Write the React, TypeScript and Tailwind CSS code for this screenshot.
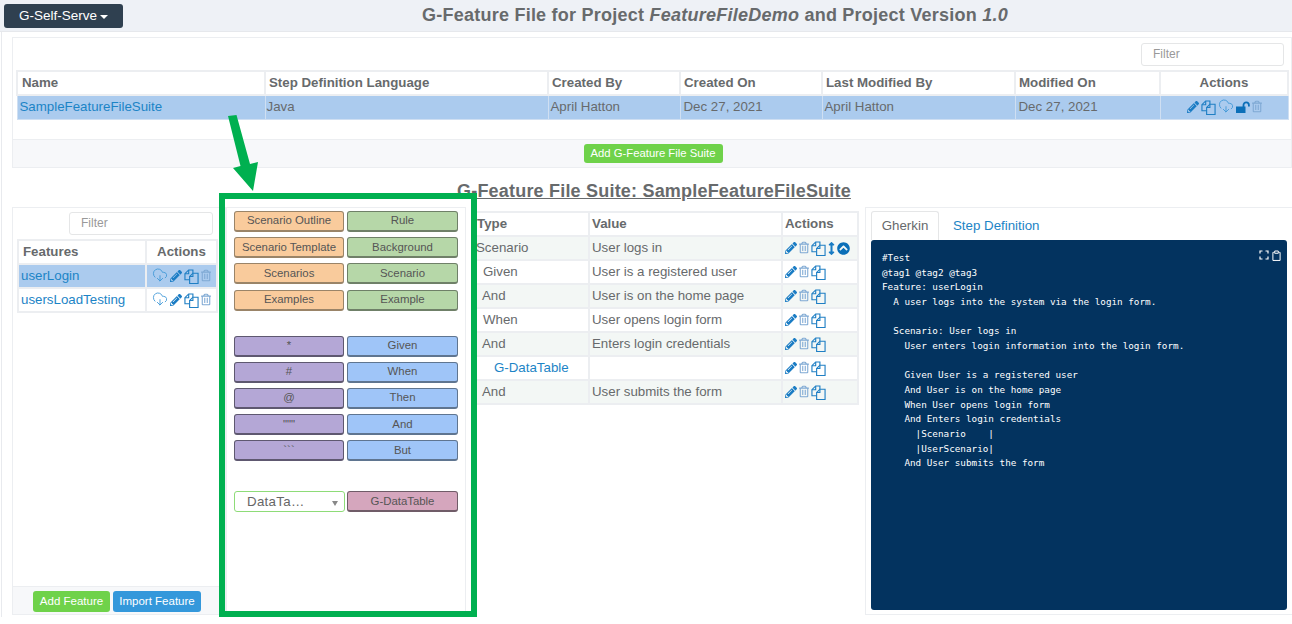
import React from "react";
import { FaArrowsAltV, FaChevronCircleUp, FaPencilAlt, FaRegTrashAlt } from "react-icons/fa";
import { CloudDownload } from "lucide-react";

const FilesIcon: React.FC = () => (
  <svg viewBox="0 0 16 16" className="w-[15px] h-[15px] text-[#1f7fc4]" fill="none" stroke="currentColor" strokeWidth="1.2">
    <path d="M6 11.5H1V5l4-4h4.5v3.5" />
    <path d="M5 1v4H1" />
    <path d="M6 15.5V8l3.5-3.5H15v11z" />
    <path d="M9.5 4.5V8H6" />
  </svg>
);

const UnlockIcon: React.FC = () => (
  <svg viewBox="0 0 14 12" className="w-[14px] h-[12px] -mt-[1px] text-[#0b6fb8]" fill="none" stroke="currentColor">
    <path d="M0 5.500h9.500V12H0z" fill="currentColor" stroke="none" />
    <path d="M7.500 6V4a2.700 2.700 0 0 1 5.400 0v1.500" strokeWidth="1.800" />
  </svg>
);

const Pencil = () => <FaPencilAlt className="w-[12px] h-[12px] text-[#1a7cc4]" />;
const Trash = () => <FaRegTrashAlt className="w-[10px] h-[13px] text-[#7fa9d4] -mt-[2px]" />;
const Cloud = () => <CloudDownload className="w-[16px] h-[16px] text-[#3d97d6] -mt-[2px]" strokeWidth={1.3} />;

const tagClass: Record<string, string> = {
  orange: "bg-[#f9cb9c] border-[#9a8468]",
  green: "bg-[#b6d7a8] border-[#6f8068]",
  purple: "bg-[#b4a7d6] border-[#5e5870]",
  blue: "bg-[#9fc5f8] border-[#5f7590]",
  pink: "bg-[#d5a6bd] border-[#705c68]",
};

const Tag: React.FC<{ color: string; label: string }> = ({ color, label }) => (
  <div className={`h-[21px] flex items-center justify-center rounded-[3px] border border-b-2 text-[11.4px] text-[#555] ${tagClass[color]}`}>
    {label}
  </div>
);

const suiteHeaders = [
  ["Name", "w-[248px] pl-[4px]"],
  ["Step Definition Language", "w-[283px] pl-[3px]"],
  ["Created By", "w-[132px] pl-[3px]"],
  ["Created On", "w-[142px] pl-[3px]"],
  ["Last Modified By", "w-[193px] pl-[3px]"],
  ["Modified On", "w-[145px] pl-[3px]"],
];

const SuiteTable: React.FC = () => (
  <table className="table-fixed border-collapse w-[1273px] text-[13.3px] text-[#676a6c]">
    <thead>
      <tr className="h-[24px] font-bold">
        {suiteHeaders.map(([h, w]) => (
          <th key={h} className={`${w} border-2 border-[#eceef1] text-left font-bold`}>{h}</th>
        ))}
        <th className="border-2 border-[#eceef1] text-center font-bold">Actions</th>
      </tr>
    </thead>
    <tbody>
      <tr className="h-[24px] bg-[#abcbee]">
        <td className="border border-[#cfdff2] px-[2px] text-[#1c84c6]">SampleFeatureFileSuite</td>
        <td className="border border-[#cfdff2] px-[1px]">Java</td>
        <td className="border border-[#cfdff2] px-[2px]">April Hatton</td>
        <td className="border border-[#cfdff2] px-[3px]">Dec 27, 2021</td>
        <td className="border border-[#cfdff2] px-[2px]">April Hatton</td>
        <td className="border border-[#cfdff2] px-[3px]">Dec 27, 2021</td>
        <td className="border border-[#cfdff2]">
          <div className="flex items-center justify-center gap-[2px]">
            <Pencil />
            <FilesIcon />
            <Cloud />
            <UnlockIcon />
            <Trash />
          </div>
        </td>
      </tr>
    </tbody>
  </table>
);

const FeaturesPanel: React.FC = () => (
  <div className="w-[214px] shrink-0 h-[408px] ml-[10px] border border-[#eceef1] flex flex-col">
    <div className="flex justify-end pt-[4px] pr-[12px]">
      <div className="w-[144px] h-[23px] border border-[#e5e6e7] rounded-[3px] pl-[11px] text-[12px] leading-[21px] text-[#999]">Filter</div>
    </div>
    <table className="table-fixed border-collapse w-[201px] ml-[4px] mt-[4px] text-[13.3px]">
      <thead>
        <tr className="h-[24px] text-[#676a6c]">
          <th className="w-[128px] border-2 border-[#eceef1] px-[4px] text-left font-bold">Features</th>
          <th className="border-2 border-[#eceef1] text-center font-bold">Actions</th>
        </tr>
      </thead>
      <tbody>
        {["userLogin", "usersLoadTesting"].map((name, i) => (
          <tr key={name} className={`h-[24px] ${i === 0 ? "bg-[#abcbee]" : ""}`}>
            <td className="border-2 border-[#eceef1] px-[2px] text-[#1c84c6]">{name}</td>
            <td className="border-2 border-[#eceef1]">
              <div className="flex items-center justify-center gap-[2px]">
                <Cloud />
                <Pencil />
                <FilesIcon />
                <Trash />
              </div>
            </td>
          </tr>
        ))}
      </tbody>
    </table>
    <div className="mt-auto h-[28px] bg-[#f7f8fa] border-t border-[#eceef1] flex items-center gap-[3px] pl-[20px] pt-[2px]">
      <div className="h-[21px] w-[77px] rounded-[3px] bg-[#6fd24a] text-white text-[11.5px] flex items-center justify-center">Add Feature</div>
      <div className="h-[21px] w-[88px] rounded-[3px] bg-[#3498db] text-white text-[11.5px] flex items-center justify-center">Import Feature</div>
    </div>
  </div>
);

const TagPanel: React.FC = () => (
  <div className="w-[240px] shrink-0 h-[408px] border border-[#eceef1] pt-[3px] pl-[7px] pr-[6px]">
    <div className="grid grid-cols-[110px_111px] gap-x-[3px] gap-y-[5.2px]">
      <Tag color="orange" label="Scenario Outline" />
      <Tag color="green" label="Rule" />
      <Tag color="orange" label="Scenario Template" />
      <Tag color="green" label="Background" />
      <Tag color="orange" label="Scenarios" />
      <Tag color="green" label="Scenario" />
      <Tag color="orange" label="Examples" />
      <Tag color="green" label="Example" />
    </div>
    <div className="grid grid-cols-[110px_111px] gap-x-[3px] gap-y-[5.2px] mt-[25px]">
      <Tag color="purple" label="*" />
      <Tag color="blue" label="Given" />
      <Tag color="purple" label="#" />
      <Tag color="blue" label="When" />
      <Tag color="purple" label="@" />
      <Tag color="blue" label="Then" />
      <Tag color="purple" label={'"""'} />
      <Tag color="blue" label="And" />
      <Tag color="purple" label="```" />
      <Tag color="blue" label="But" />
    </div>
    <div className="grid grid-cols-[111px_111px] gap-x-[2px] mt-[30px]">
      <div className="h-[21px] rounded-[3px] border border-[#8edc78] flex items-center pl-[12px] pr-[6px] text-[13.3px] tracking-[0.3px] text-[#666]">
        DataTa…
        <span className="ml-auto mt-[3px] w-0 h-0 border-x-[3px] border-x-transparent border-t-[5px] border-t-[#888]" />
      </div>
      <Tag color="pink" label="G-DataTable" />
    </div>
  </div>
);

const steps = [
  ["Scenario", "User logs in", "pl-[2px]"],
  ["Given", "User is a registered user", "pl-[9px]"],
  ["And", "User is on the home page", "pl-[8px]"],
  ["When", "User opens login form", "pl-[9px]"],
  ["And", "Enters login credentials", "pl-[8px]"],
  ["G-DataTable", "", "pl-[20px] text-[#1c84c6]"],
  ["And", "User submits the form", "pl-[8px]"],
];

const StepsTable: React.FC = () => (
  <div className="w-[399px] shrink-0 pt-[4px] pl-[6px]">
    <table className="table-fixed border-collapse w-[387px] text-[13.3px] text-[#676a6c]">
      <thead>
        <tr className="h-[24px]">
          <th className="w-[116px] border-2 border-[#eceef1] pl-[3px] text-left font-bold">Type</th>
          <th className="w-[193px] border-2 border-[#eceef1] px-[2px] text-left font-bold">Value</th>
          <th className="border-2 border-[#eceef1] px-[2px] text-left font-bold">Actions</th>
        </tr>
      </thead>
      <tbody>
        {steps.map(([type, value, cls], i) => (
          <tr key={i} className={`h-[24px] ${i % 2 === 0 ? "bg-[#f3f7f5]" : ""}`}>
            <td className={`border-2 border-[#eceef1] ${cls}`}>{type}</td>
            <td className="border-2 border-[#eceef1] px-[2px]">{value}</td>
            <td className="border-2 border-[#eceef1] px-[2px]">
              <div className="flex items-center gap-[2px]">
                <Pencil />
                <Trash />
                <FilesIcon />
                {i === 0 && <FaArrowsAltV className="w-[7px] h-[13px] text-[#1a7cc4]" />}
                {i === 0 && <FaChevronCircleUp className="w-[13px] h-[13px] text-[#0b6fb8]" />}
              </div>
            </td>
          </tr>
        ))}
      </tbody>
    </table>
  </div>
);

const gherkin = `#Test
@tag1 @tag2 @tag3
Feature: userLogin
  A user logs into the system via the login form.

  Scenario: User logs in
    User enters login information into the login form.

    Given User is a registered user
    And User is on the home page
    When User opens login form
    And Enters login credentials
      |Scenario    |
      |UserScenario|
    And User submits the form`;

const GherkinPanel: React.FC = () => (
  <div className="flex-1 h-[408px] border border-[#eceef1] pt-[3px] px-[5px] flex flex-col">
    <div className="flex h-[29px] text-[13.3px]">
      <div className="w-[68px] rounded-t-[3px] border border-b-0 border-[#e5e6e7] flex items-center justify-center text-[#676a6c]">Gherkin</div>
      <div className="ml-[14px] flex items-center text-[#1c84c6]">Step Definition</div>
    </div>
    <div className="relative w-[416px] h-[370px] rounded-[3px] bg-[#03335f] pl-[11px] pt-[11px]">
      <pre className="font-['DejaVu_Sans_Mono',monospace] text-[9.3px] leading-[14.65px] text-white">{gherkin}</pre>
      <div className="absolute top-[10px] right-[6px] flex gap-[3px] text-white">
        <svg viewBox="0 0 10 10" className="w-[10px] h-[10px]" fill="none" stroke="currentColor" strokeWidth="1.2">
          <path d="M1 3.500V1h2.500M6.500 1H9v2.500M9 6.500V9H6.500M3.500 9H1V6.500" />
        </svg>
        <svg viewBox="0 0 10 12" className="w-[9px] h-[11px]" fill="none" stroke="currentColor" strokeWidth="1.1">
          <path d="M2 2.500H1v9h8v-9H8M3 1h4v2.500H3z" />
        </svg>
      </div>
    </div>
  </div>
);

export default function App() {
  return (
    <div className="relative w-[1292px] h-[624px] overflow-hidden bg-white font-['Liberation_Sans',Arial,sans-serif]">
      <header className="relative h-[32px] bg-[#eef1f6] border-b border-[#e6e8ec] flex items-center justify-center pl-[138px]">
        <div className="absolute left-[4px] top-[4px] w-[119px] h-[24px] rounded-[3px] bg-[#2f4050] text-white text-[13.5px] flex items-center justify-center gap-[3px]">
          G-Self-Serve
          <span className="mt-[2px] w-0 h-0 border-x-[4px] border-x-transparent border-t-[4px] border-t-white" />
        </div>
        <h1 className="text-[18px] font-bold tracking-[0.24px] text-[#676a6c]">
          G-Feature File for Project <i>FeatureFileDemo</i> and Project Version <i>1.0</i>
        </h1>
      </header>

      <div className="ml-[1px] h-[585px] border-l border-[#e8eaee]">
        <section className="ml-[10px] pt-[5px]">
          <div className="h-[102px] border border-b-0 border-[#eceef1] pl-[3px] pt-[5px]">
            <div className="flex justify-end pr-[7px]">
              <div className="w-[143px] h-[23px] border border-[#e5e6e7] rounded-[3px] pl-[11px] text-[12px] leading-[21px] text-[#999]">Filter</div>
            </div>
            <div className="mt-[4px]"><SuiteTable /></div>
          </div>
          <div className="h-[29px] bg-[#f7f8fa] border border-[#eceef1] flex items-center justify-center pl-[2px]">
            <div className="h-[19px] w-[139px] rounded-[3px] bg-[#6fd24a] text-white text-[11.3px] flex items-center justify-center">Add G-Feature File Suite</div>
          </div>
        </section>

        <h2 className="mt-[12px] h-[27px] pl-[455px] text-[18px] leading-[22px] font-bold tracking-[0.2px] underline text-[#676a6c]">
          G-Feature File Suite: SampleFeatureFileSuite
        </h2>

        <div className="flex">
          <FeaturesPanel />
          <TagPanel />
          <StepsTable />
          <GherkinPanel />
        </div>
      </div>

      {/* green callout drawn over the page */}
      <div className="absolute left-[219px] top-[193px] w-[258px] h-[424px] border-[6px] border-[#00b050]" />
      <svg className="absolute left-[220px] top-[112px] w-[50px] h-[82px]" viewBox="0 0 50 82">
        <path d="M8 4l8.500-1L30 52l8-2-5 29-20-23 7.500-2z" fill="#00b050" />
      </svg>
    </div>
  );
}
